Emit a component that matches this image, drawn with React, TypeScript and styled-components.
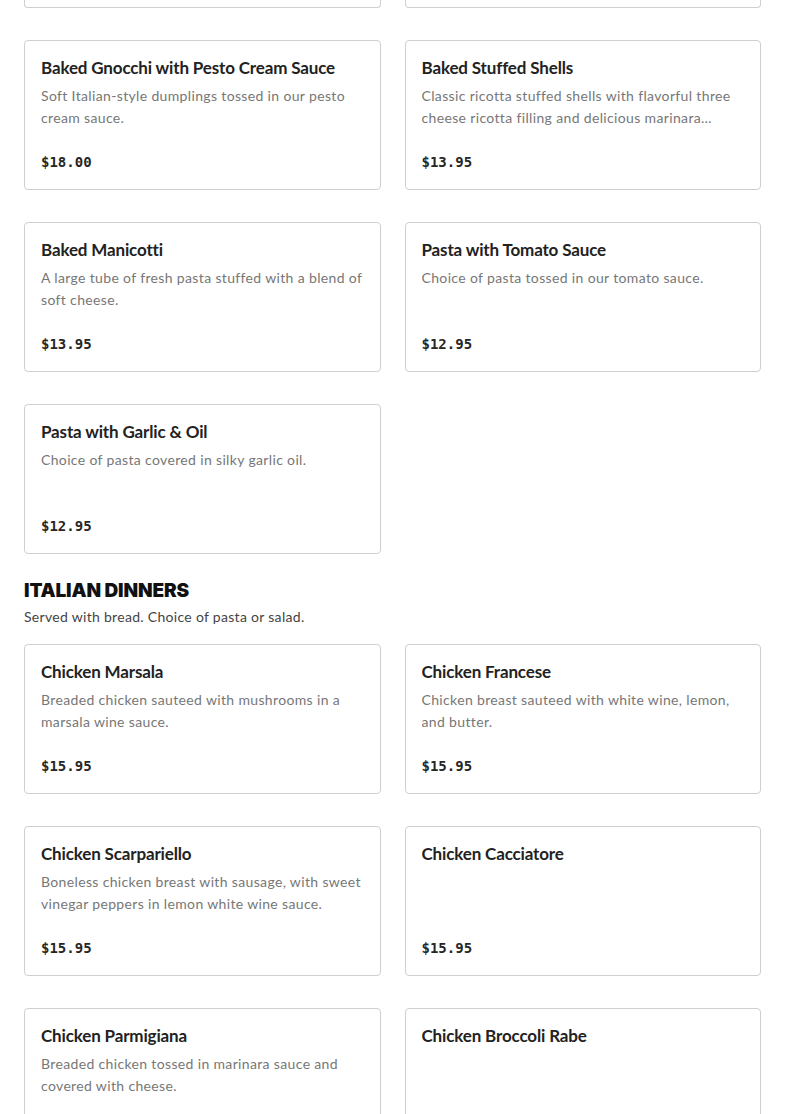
import React from "react";
import styled, { createGlobalStyle } from "styled-components";

const Global = createGlobalStyle`
  html, body { margin: 0; padding: 0; background: #fff; }
  body { font-family: Lato, "Noto Sans", sans-serif; color: #222; }
`;

const Page = styled.div`
  padding: 0 24px;
  display: flex;
  flex-direction: column;
`;

const Section = styled.section`
  display: flex;
  flex-direction: column;
`;

const Heading = styled.h2`
  margin: 24px 0 0;
  font-family: Inter, "Noto Sans", sans-serif;
  font-weight: 900;
  font-size: 19px;
  line-height: 26px;
  letter-spacing: -0.15px;
  color: #111;
`;

const SubText = styled.p`
  margin: 2px 0 16px;
  font-size: 14px;
  line-height: 22px;
  letter-spacing: 0.3px;
  color: #444;
`;

const Grid = styled.div`
  display: grid;
  grid-template-columns: 1fr 1fr;
  column-gap: 24px;
  row-gap: 32px;
`;

const CardTail = styled.div`
  height: 8px;
  border: 1px solid #cfcfcf;
  border-top: none;
  border-radius: 0 0 4px 4px;
  box-sizing: border-box;
`;

const Card = styled.div`
  border: 1px solid #cfcfcf;
  border-radius: 4px;
  padding: 16px;
  display: flex;
  flex-direction: column;
  height: 150px;
  box-sizing: border-box;
`;

const Title = styled.h3`
  margin: 0;
  font-size: 17px;
  font-weight: 700;
  line-height: 22px;
  letter-spacing: -0.15px;
  color: #222;
  white-space: nowrap;
  overflow: hidden;
  text-overflow: ellipsis;
`;

const Desc = styled.p`
  margin: 6px 0 0;
  font-size: 14px;
  line-height: 22px;
  height: 44px;
  letter-spacing: 0.35px;
  color: #777;
  display: -webkit-box;
  -webkit-line-clamp: 2;
  -webkit-box-orient: vertical;
  overflow: hidden;
`;

const Price = styled.div`
  margin-top: auto;
  font-family: "DejaVu Sans Mono", "Liberation Mono", monospace;
  font-weight: 700;
  font-size: 14px;
  line-height: 22px;
  color: #262626;
`;

type Item = { name: string; desc: string; price: string };

const pasta: Item[] = [
  { name: "Baked Gnocchi with Pesto Cream Sauce", desc: "Soft Italian-style dumplings tossed in our pesto cream sauce.", price: "$18.00" },
  { name: "Baked Stuffed Shells", desc: "Classic ricotta stuffed shells with flavorful three cheese ricotta filling and delicious marinara sauce.", price: "$13.95" },
  { name: "Baked Manicotti", desc: "A large tube of fresh pasta stuffed with a blend of soft cheese.", price: "$13.95" },
  { name: "Pasta with Tomato Sauce", desc: "Choice of pasta tossed in our tomato sauce.", price: "$12.95" },
  { name: "Pasta with Garlic & Oil", desc: "Choice of pasta covered in silky garlic oil.", price: "$12.95" },
];

const dinners: Item[] = [
  { name: "Chicken Marsala", desc: "Breaded chicken sauteed with mushrooms in a marsala wine sauce.", price: "$15.95" },
  { name: "Chicken Francese", desc: "Chicken breast sauteed with white wine, lemon, and butter.", price: "$15.95" },
  { name: "Chicken Scarpariello", desc: "Boneless chicken breast with sausage, with sweet vinegar peppers in lemon white wine sauce.", price: "$15.95" },
  { name: "Chicken Cacciatore", desc: "", price: "$15.95" },
  { name: "Chicken Parmigiana", desc: "Breaded chicken tossed in marinara sauce and covered with cheese.", price: "$15.95" },
  { name: "Chicken Broccoli Rabe", desc: "", price: "$16.95" },
];

const MenuCard = ({ item }: { item: Item }) => (
  <Card>
    <Title>{item.name}</Title>
    <Desc>{item.desc}</Desc>
    <Price>{item.price}</Price>
  </Card>
);

export default function App() {
  return (
    <>
      <Global />
      <Page>
        <Section>
          <Grid>
            <CardTail />
            <CardTail />
            {pasta.map((it) => (
              <MenuCard key={it.name} item={it} />
            ))}
          </Grid>
        </Section>
        <Section>
          <Heading>ITALIAN DINNERS</Heading>
          <SubText>Served with bread. Choice of pasta or salad.</SubText>
          <Grid>
            {dinners.map((it) => (
              <MenuCard key={it.name} item={it} />
            ))}
          </Grid>
        </Section>
      </Page>
    </>
  );
}
